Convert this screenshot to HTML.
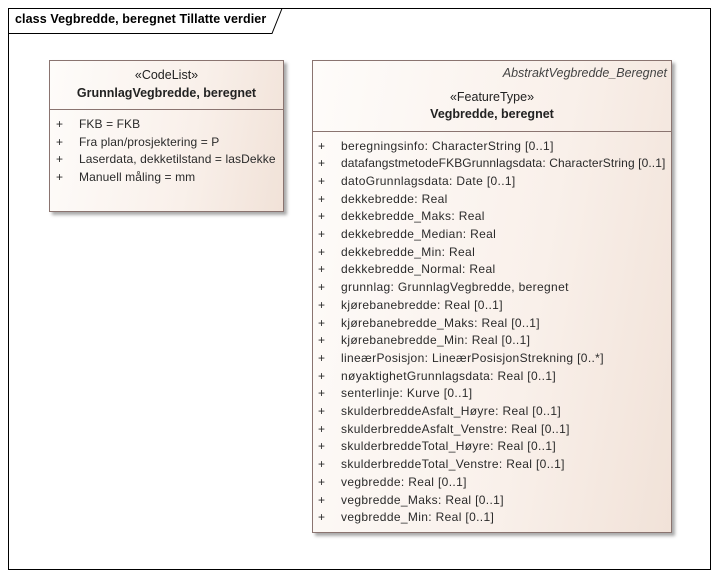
<!DOCTYPE html>
<html><head><meta charset="utf-8"><style>
body{margin:0;width:722px;height:577px;background:#fff;position:relative;overflow:hidden;font-family:"Liberation Sans",sans-serif;color:#222}
.frame{position:absolute;left:8px;top:8px;width:701px;height:560px;border:1px solid #000}
.tab{position:absolute;left:8px;top:8px}
.tabt{position:absolute;left:15px;top:12px;font-size:12.5px;font-weight:bold;color:#000;letter-spacing:0.1px}
.box{position:absolute;border:1px solid #8a7470;background:linear-gradient(100deg,#fefcfa 0%,#f9f0ea 60%,#f1e2d8 100%);box-shadow:3px 3px 3px #aaa}
.hd{position:absolute;left:0;right:0;border-bottom:1px solid #8a7470;text-align:center;font-size:12.5px}
.it{position:absolute;font-size:12px;letter-spacing:0.35px;white-space:nowrap;color:#2a2a2a}
.l{letter-spacing:0.1px}
.it span{position:absolute;left:-23px}
</style></head><body>
<div class="frame"></div>
<svg class="tab" width="280" height="26"><path d="M0 25.5 H264 L274 0.5" fill="none" stroke="#000" stroke-width="1"/></svg>
<div class="tabt">class Vegbredde, beregnet Tillatte verdier</div>

<div class="box" style="left:49px;top:60px;width:233px;height:150px">
 <div class="hd" style="top:0;height:48px">
  <div style="margin-top:7px">«CodeList»</div>
  <div style="font-weight:bold;margin-top:4px">GrunnlagVegbredde, beregnet</div>
 </div>
</div>
<div class="it l" style="left:79px;top:117px"><span>+</span>FKB = FKB</div>
<div class="it l" style="left:79px;top:135px"><span>+</span>Fra plan/prosjektering = P</div>
<div class="it l" style="left:79px;top:152px"><span>+</span>Laserdata, dekketilstand = lasDekke</div>
<div class="it l" style="left:79px;top:170px"><span>+</span>Manuell måling = mm</div>

<div class="box" style="left:312px;top:60px;width:358px;height:471px">
 <div class="hd" style="top:0;height:70px">
  <div style="text-align:right;font-style:italic;margin:5px 4px 0 0;color:#444">AbstraktVegbredde_Beregnet</div>
  <div style="margin-top:10px">«FeatureType»</div>
  <div style="font-weight:bold;margin-top:3px">Vegbredde, beregnet</div>
 </div>
</div>
<div id="r"></div>
<script>
var a=["beregningsinfo: CharacterString [0..1]","datafangstmetodeFKBGrunnlagsdata: CharacterString [0..1]","datoGrunnlagsdata: Date [0..1]","dekkebredde: Real","dekkebredde_Maks: Real","dekkebredde_Median: Real","dekkebredde_Min: Real","dekkebredde_Normal: Real","grunnlag: GrunnlagVegbredde, beregnet","kjørebanebredde: Real [0..1]","kjørebanebredde_Maks: Real [0..1]","kjørebanebredde_Min: Real [0..1]","lineærPosisjon: LineærPosisjonStrekning [0..*]","nøyaktighetGrunnlagsdata: Real [0..1]","senterlinje: Kurve [0..1]","skulderbreddeAsfalt_Høyre: Real [0..1]","skulderbreddeAsfalt_Venstre: Real [0..1]","skulderbreddeTotal_Høyre: Real [0..1]","skulderbreddeTotal_Venstre: Real [0..1]","vegbredde: Real [0..1]","vegbredde_Maks: Real [0..1]","vegbredde_Min: Real [0..1]"];
var h="";for(var i=0;i<a.length;i++){h+='<div class="it" style="left:341px;top:'+(138.5+i*17.7)+'px'+(i==1?';letter-spacing:0.1px':'')+'"><span>+</span>'+a[i]+'</div>';}
document.getElementById("r").innerHTML=h;
</script>
</body></html>
